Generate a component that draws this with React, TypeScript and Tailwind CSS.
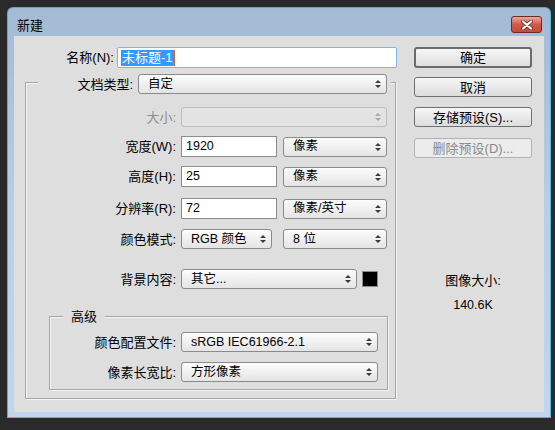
import React from "react";

function Arrows({ disabled }: { disabled?: boolean }) {
  return (
    <svg width="6" height="10" viewBox="0 0 6 10" className="ml-auto shrink-0">
      <path
        d="M0 4 L3 1 L6 4 Z M0 6 L3 9 L6 6 Z"
        fill={disabled ? "#a8a8a8" : "#3a3a3a"}
      />
    </svg>
  );
}

function Select({
  text,
  className,
  disabled,
}: {
  text?: string;
  className: string;
  disabled?: boolean;
}) {
  return (
    <div
      className={`flex h-[20px] items-center rounded-[3px] border pl-[9px] pr-[5px] text-[12.5px] ${
        disabled
          ? "border-[#bdbdbd] bg-[#e3e3e3]"
          : "border-[#8a8a8a] bg-linear-to-b from-[#fcfcfc] to-[#e4e4e4]"
      } ${className}`}
    >
      <span className="leading-none">{text}</span>
      <Arrows disabled={disabled} />
    </div>
  );
}

function Input({ value, className }: { value: string; className: string }) {
  return (
    <div
      className={`flex h-[21px] items-center border border-[#8c8c8c] bg-white pl-[4px] text-[12.5px] ${className}`}
    >
      <span className="leading-none">{value}</span>
    </div>
  );
}

function Button({
  label,
  disabled,
  primary,
  className = "",
}: {
  label: string;
  disabled?: boolean;
  primary?: boolean;
  className?: string;
}) {
  return (
    <div
      className={`flex w-[118px] items-center justify-center rounded-[3px] ${
        primary
          ? "h-[21px] border-2 border-[#6b6b6b] bg-linear-to-b from-[#f7f7f7] to-[#dedede]"
          : disabled
            ? "h-[20px] border border-[#b2b2b2] bg-[#ececec] text-[#8a8a8a]"
            : "h-[20px] border border-[#707070] bg-linear-to-b from-[#f7f7f7] to-[#dcdcdc]"
      } ${className}`}
    >
      <span className="leading-none">{label}</span>
    </div>
  );
}

export default function App() {
  return (
    <div className="h-[430px] w-[555px] overflow-hidden bg-[#2a2a2a] pl-[7px] pt-[7px] font-['Liberation_Sans','Noto_Sans_CJK_SC',sans-serif] text-[13px] text-black">
      {/* window frame */}
      <div className="h-[411px] w-[544px] rounded-t-[6px] border border-[#7d9cbd] border-b-[#3bbde9] border-r-[#5ab8e0] bg-linear-to-b from-[#a2bad4] via-[#b9cfe6] to-[#c0d6ed] px-[6px] pb-[5px]">
        {/* title bar */}
        <div className="flex h-[28px] items-start pl-[3px] pr-[2px]">
          <span className="mt-[10px] leading-[16px]">新建</span>
          <div className="ml-auto mt-[8px] flex h-[17px] w-[31px] items-center justify-center rounded-[3px] border border-[#6b2a22] bg-linear-to-b from-[#e9a89e] via-[#d1594b] to-[#c9493b]">
            <svg width="14" height="10" viewBox="0 0 14 10">
              <path
                d="M3 1.5 L11 8.5 M11 1.5 L3 8.5"
                stroke="#6a3b36"
                strokeWidth="4"
                strokeLinecap="round"
              />
              <path
                d="M3 1.5 L11 8.5 M11 1.5 L3 8.5"
                stroke="#ffffff"
                strokeWidth="2.2"
                strokeLinecap="round"
              />
            </svg>
          </div>
        </div>

        {/* client area */}
        <div className="flex h-[376px] bg-[#dedede]">
          {/* left column */}
          <div className="w-[400px] pt-[11px]">
            <div className="flex h-[21px] items-center">
              <div className="w-[100px] text-right leading-none">名称(N):</div>
              <div className="ml-[3px] flex h-[21px] w-[280px] items-center rounded-[2px] border border-[#82b3e2] bg-white pl-[3px]">
                <span className="bg-[#3399ff] px-[1px] leading-[16px] text-white">
                  未标题-1
                </span>
                <span className="h-[16px] w-[1px] bg-[#c86a1e]" />
              </div>
            </div>

            {/* document group */}
            <div className="ml-[11px] mt-[14px] w-[371px] border border-[#a6a6a6] pb-[8px] shadow-[inset_1px_1px_0_#f4f4f4,1px_1px_0_#f4f4f4]">
              <div className="-mt-[9px] ml-[12px] mr-[4px] flex h-[20px] items-center bg-[#dedede]">
                <div className="w-[95px] text-right leading-none">文档类型:</div>
                <Select text="自定" className="ml-[5px] w-[249px]" />
              </div>

              <div className="mt-[13px] flex h-[20px] items-center">
                <div className="w-[150px] text-right leading-none text-[#8d8d8d]">大小:</div>
                <Select disabled className="ml-[5px] w-[206px]" />
              </div>

              <div className="mt-[9px] flex h-[21px] items-center">
                <div className="w-[150px] text-right leading-none">宽度(W):</div>
                <Input value="1920" className="ml-[5px] w-[96px]" />
                <Select text="像素" className="ml-[6px] w-[104px]" />
              </div>

              <div className="mt-[9px] flex h-[21px] items-center">
                <div className="w-[150px] text-right leading-none">高度(H):</div>
                <Input value="25" className="ml-[5px] w-[96px]" />
                <Select text="像素" className="ml-[6px] w-[104px]" />
              </div>

              <div className="mt-[11px] flex h-[21px] items-center">
                <div className="w-[150px] text-right leading-none">分辨率(R):</div>
                <Input value="72" className="ml-[5px] w-[96px]" />
                <Select text="像素/英寸" className="ml-[6px] w-[104px]" />
              </div>

              <div className="mt-[10px] flex h-[20px] items-center">
                <div className="w-[150px] text-right leading-none">颜色模式:</div>
                <Select text="RGB 颜色" className="ml-[5px] w-[91px]" />
                <Select text="8 位" className="ml-[11px] w-[104px]" />
              </div>

              <div className="mt-[20px] flex h-[20px] items-center">
                <div className="w-[150px] text-right leading-none">背景内容:</div>
                <Select text="其它..." className="ml-[5px] w-[176px]" />
                <div className="ml-[5px] h-[16px] w-[16px] border border-[#8a8a8a] bg-black" />
              </div>

              {/* advanced group */}
              <div className="ml-[23px] mt-[27px] w-[339px] border border-[#a6a6a6] pb-[7px] shadow-[inset_1px_1px_0_#f4f4f4,1px_1px_0_#f4f4f4]">
                <div className="-mt-[8px] ml-[13px] h-[15px] w-[42px] bg-[#dedede] text-center leading-[15px]">
                  高级
                </div>
                <div className="mt-[8px] flex h-[20px] items-center">
                  <div className="w-[126px] text-right leading-none">颜色配置文件:</div>
                  <Select text="sRGB IEC61966-2.1" className="ml-[5px] w-[197px]" />
                </div>
                <div className="mt-[10px] flex h-[20px] items-center">
                  <div className="w-[126px] text-right leading-none">像素长宽比:</div>
                  <Select text="方形像素" className="ml-[5px] w-[197px]" />
                </div>
              </div>
            </div>
          </div>

          {/* right column */}
          <div className="flex w-[118px] flex-col pt-[11px]">
            <Button label="确定" primary />
            <Button label="取消" className="mt-[9px]" />
            <Button label="存储预设(S)..." className="mt-[10px]" />
            <Button label="删除预设(D)..." disabled className="mt-[11px]" />
            <div className="mt-[115px] text-center leading-[16px]">图像大小:</div>
            <div className="mt-[8px] text-center text-[12.5px] leading-[16px]">140.6K</div>
          </div>
        </div>
      </div>
    </div>
  );
}
